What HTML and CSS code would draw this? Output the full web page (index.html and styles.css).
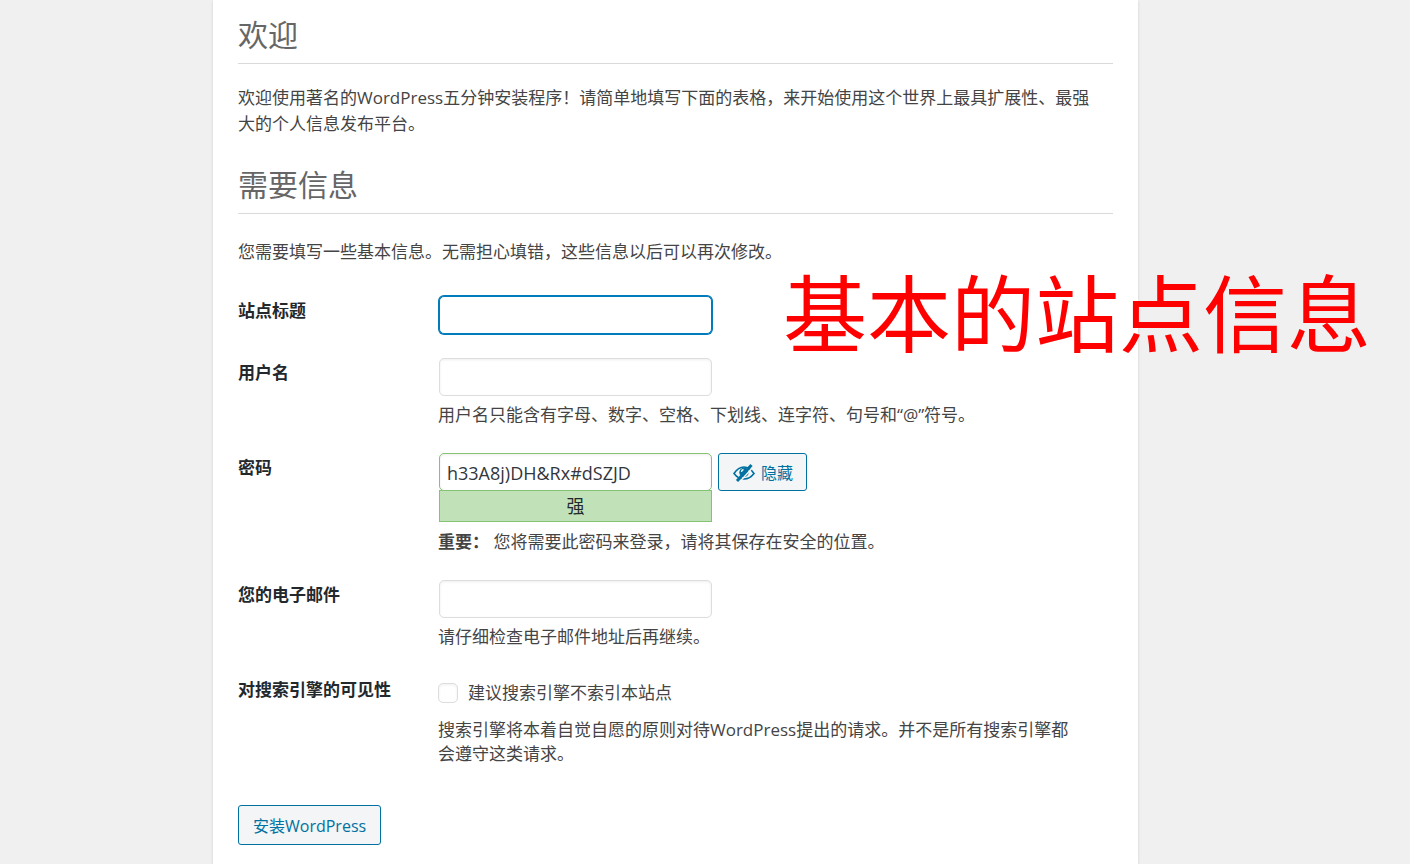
FILE: index.html
```html
<!DOCTYPE html>
<html lang="zh-CN">
<head>
    <meta charset="UTF-8">
    <title>WordPress › 安装</title>
    <link rel="stylesheet" href="styles.css">
</head>
<body>
    <main class="setup">
        <h1>欢迎</h1>
        <p class="intro">欢迎使用著名的WordPress五分钟安装程序！请简单地填写下面的表格，来开始使用这个世界上最具扩展性、最强大的个人信息发布平台。</p>

        <h2>需要信息</h2>
        <p>您需要填写一些基本信息。无需担心填错，这些信息以后可以再次修改。</p>

        <form class="setup-form">
            <div class="form-row">
                <label class="form-label" for="weblog_title">站点标题</label>
                <div class="form-field">
                    <input class="text-input active" type="text" id="weblog_title">
                </div>
            </div>
            <div class="form-row">
                <label class="form-label" for="user_login">用户名</label>
                <div class="form-field">
                    <input class="text-input" type="text" id="user_login">
                    <p class="description">用户名只能含有字母、数字、空格、下划线、连字符、句号和“@”符号。</p>
                </div>
            </div>
            <div class="form-row">
                <label class="form-label" for="pass1">密码</label>
                <div class="form-field">
                    <div class="password">
                        <input class="text-input strong" type="text" id="pass1" value="h33A8j)DH&amp;Rx#dSZJD">
                        <button class="button button-hide" type="button">
                            <svg class="icon" viewBox="0 0 22 18" aria-hidden="true">
                                <path d="M1 9.500C4 5 7 3 11 3S18 5 21 9.500C18 13.500 15 15 11 15S4 13.500 1 9.500Z" fill="none" stroke="currentColor" stroke-width="1.600"/>
                                <circle cx="11" cy="8.500" r="4.700" fill="currentColor"/>
                                <path d="M8.500 8Q8.500 6 10.500 5.500" fill="none" stroke="#f3f5f6" stroke-width="1.300"/>
                                <path d="M6.500 18L21 2" stroke="#f3f5f6" stroke-width="1.500"/>
                                <path d="M4 17L18.500 1" stroke="currentColor" stroke-width="3"/>
                            </svg>
                            <span>隐藏</span>
                        </button>
                    </div>
                    <div class="strength">强</div>
                    <p class="description"><strong>重要：</strong> 您将需要此密码来登录，请将其保存在安全的位置。</p>
                </div>
            </div>
            <div class="form-row">
                <label class="form-label" for="admin_email">您的电子邮件</label>
                <div class="form-field">
                    <input class="text-input" type="email" id="admin_email">
                    <p class="description">请仔细检查电子邮件地址后再继续。</p>
                </div>
            </div>
            <div class="form-row">
                <span class="form-label">对搜索引擎的可见性</span>
                <div class="form-field">
                    <label class="check" for="blog_public">
                        <input type="checkbox" id="blog_public">
                        建议搜索引擎不索引本站点
                    </label>
                    <p class="description">搜索引擎将本着自觉自愿的原则对待WordPress提出的请求。并不是所有搜索引擎都会遵守这类请求。</p>
                </div>
            </div>
            <button class="button button-install" type="submit">安装WordPress</button>
        </form>
    </main>
    <div class="note">基本的站点信息</div>
</body>
</html>
```

FILE: styles.css
```css
* {
    box-sizing: border-box;
}
body {
    margin: 0;
    padding-right: 59px;
    background: #f0f0f0;
    color: #444;
    font-family: "Open Sans", "Noto Sans CJK SC", sans-serif;
    font-size: 17px;
    line-height: 26px;
}
.setup {
    max-width: 925px;
    min-height: 100vh;
    margin: 0 auto;
    padding: 14px 25px 19px;
    background: #fff;
    box-shadow: 0 1px 3px rgba(0, 0, 0, 0.13);
}
h1,
h2 {
    margin: 0 0 21px;
    padding-bottom: 7px;
    border-bottom: 1px solid #dadada;
    color: #666;
    font-size: 30px;
    font-weight: 400;
    line-height: 42px;
}
h2 {
    margin: 27px 0 25px;
}
p {
    margin: 0;
}
.intro {
    padding-right: 16px;
}
.setup-form {
    margin-top: 19px;
}
.form-row {
    display: grid;
    grid-template-columns: 200px 1fr;
    padding: 12px 0;
}
.form-label {
    padding-top: 2px;
    color: #23282d;
    font-weight: 700;
}
.text-input {
    display: block;
    width: 273px;
    height: 38px;
    margin-left: 1px;
    padding: 4px 7px 2px;
    border: 1px solid #ddd;
    border-radius: 5px;
    background: #fff;
    box-shadow: inset 0 1px 3px rgba(0, 0, 0, 0.07);
    color: #32373c;
    font: inherit;
    font-size: 18px;
}
.text-input.active {
    border-color: #007cba;
    box-shadow: 0 0 0 1px #007cba;
}
.text-input.strong {
    border-color: #83c373;
}
.description {
    margin: 7px 0 2px;
    padding-right: 40px;
    line-height: 24px;
}
.password {
    display: flex;
    gap: 6px;
}
.strength {
    width: 273px;
    height: 32px;
    margin: -1px 0 8px 1px;
    border: 1px solid #83c373;
    background: #c1e1b9;
    color: #23282d;
    font-size: 18px;
    line-height: 30px;
    text-align: center;
}
.button {
    border: 1px solid #0071a1;
    border-radius: 3px;
    background: #f3f5f6;
    color: #0071a1;
    font: inherit;
    font-size: 16px;
}
.button-hide {
    display: flex;
    align-items: center;
    gap: 6px;
    height: 38px;
    padding: 2px 13px 0 14px;
}
.icon {
    width: 22px;
    height: 18px;
}
.button-install {
    height: 40px;
    margin-top: 25px;
    padding: 2px 14px 0;
}
.check {
    display: flex;
    align-items: center;
    gap: 10px;
    height: 36px;
}
.check input {
    appearance: none;
    width: 20px;
    height: 20px;
    margin: 0;
    border: 1px solid #ddd;
    border-radius: 5px;
    background: #fff;
    box-shadow: inset 0 1px 3px rgba(0, 0, 0, 0.07);
}
/* red caption laid over the form */
.note {
    position: absolute;
    top: 264px;
    left: 783px;
    color: #f00;
    font-size: 84px;
    line-height: 100px;
    white-space: nowrap;
}
```
